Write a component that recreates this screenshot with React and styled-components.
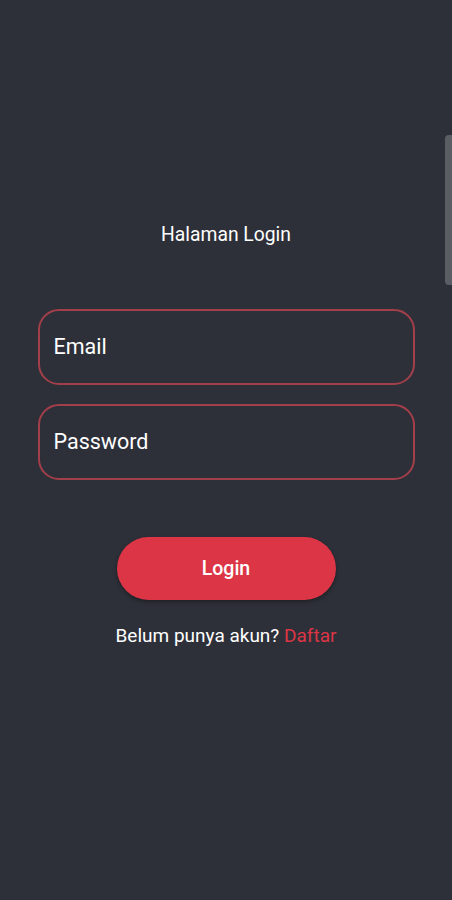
import React from "react";
import styled, { createGlobalStyle } from "styled-components";

const GlobalStyle = createGlobalStyle`
  html, body {
    margin: 0;
    padding: 0;
    background: #2e3039;
    font-family: Roboto, "Noto Sans", sans-serif;
  }
`;

const App = () => {
  return (
    <Screen>
      <GlobalStyle />
      <Title>Halaman Login</Title>
      <Form>
        <Field>
          <FieldLabel>Email</FieldLabel>
        </Field>
        <Field>
          <FieldLabel>Password</FieldLabel>
        </Field>
      </Form>
      <LoginButton type="button">Login</LoginButton>
      <RegisterText>
        Belum punya akun? <RegisterLink>Daftar</RegisterLink>
      </RegisterText>
      <ScrollThumb />
    </Screen>
  );
};

export default App;

const Screen = styled.div`
  position: relative;
  width: 452px;
  height: 900px;
  background: #2e3039;
  display: flex;
  flex-direction: column;
  align-items: center;
  padding-top: 223px;
  box-sizing: border-box;
  overflow: hidden;
`;

const Title = styled.div`
  color: #ffffff;
  font-size: 19.3px;
  line-height: 24px;
`;

const Form = styled.div`
  margin-top: 62px;
  width: 377px;
  display: flex;
  flex-direction: column;
  gap: 19px;
`;

const Field = styled.div`
  height: 76px;
  border: 2px solid #a23f4a;
  border-radius: 21px;
  box-sizing: border-box;
  display: flex;
  align-items: center;
  padding: 0 14px;
`;

const FieldLabel = styled.span`
  color: #ffffff;
  font-size: 21.5px;
  margin-top: -2px;
`;

const LoginButton = styled.button`
  margin-top: 57px;
  width: 219px;
  height: 63px;
  border: none;
  border-radius: 32px;
  background: #dc3545;
  color: #ffffff;
  font-family: Roboto, "Noto Sans", sans-serif;
  font-weight: 500;
  font-size: 19.5px;
  box-shadow: 0 2px 4px rgba(0, 0, 0, 0.35);
`;

const RegisterText = styled.div`
  margin-top: 24px;
  color: #ffffff;
  font-size: 19px;
`;

const RegisterLink = styled.span`
  color: #dc3545;
`;

const ScrollThumb = styled.div`
  position: absolute;
  top: 135px;
  right: 0;
  width: 7px;
  height: 150px;
  background: #5b5d64;
  border-radius: 4px 0 0 4px;
`;
